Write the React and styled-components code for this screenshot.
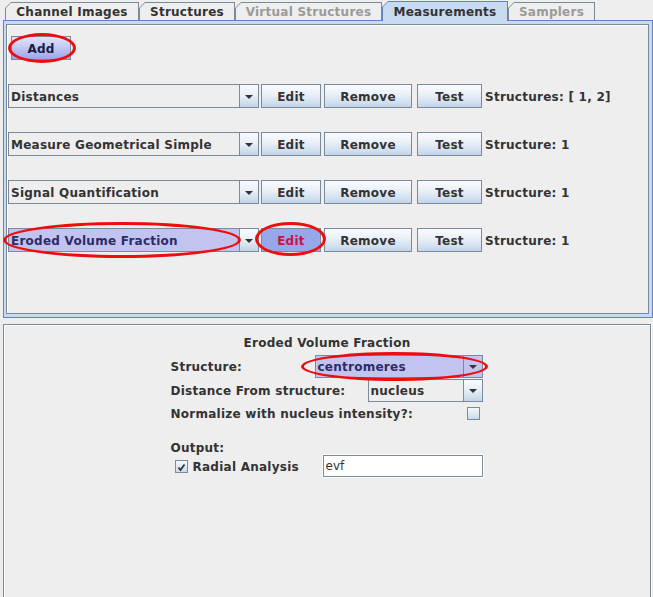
import React from "react";
import styled, { createGlobalStyle } from "styled-components";

const GlobalStyle = createGlobalStyle`
  html, body {
    margin: 0;
    padding: 0;
    background: #eeeeee;
  }
  body {
    font-family: "DejaVu Sans", Verdana, sans-serif;
    font-size: 12px;
    font-weight: 700;
    letter-spacing: 0.25px;
    color: #333333;
  }
`;

const measurements = [
	{ name: "Distances", info: "Structures: [ 1, 2]" },
	{ name: "Measure Geometrical Simple", info: "Structure: 1" },
	{ name: "Signal Quantification", info: "Structure: 1" },
	{ name: "Eroded Volume Fraction", info: "Structure: 1", marked: true },
];

const tabs = [
	{ label: "Channel Images", width: 134 },
	{ label: "Structures", width: 96 },
	{ label: "Virtual Structures", width: 147, disabled: true },
	{ label: "Measurements", width: 126, selected: true },
	{ label: "Samplers", width: 87, disabled: true },
];

function Combo({ value, width, height, marked, markArrow }) {
	return (
		<StyledCombo $width={width} $height={height}>
			<ComboField $marked={marked}>{value}</ComboField>
			<ComboArrow $marked={markArrow}>
				<DownTriangle />
			</ComboArrow>
		</StyledCombo>
	);
}

function Marked({ ring, children }) {
	return (
		<StyledMarked>
			{children}
			<Ring style={ring} />
		</StyledMarked>
	);
}

function App() {
	return (
		<>
			<GlobalStyle />
			<Root>
				<TabBar>
					{tabs.map((t) => (
						<Tab
							key={t.label}
							$width={t.width}
							$selected={t.selected}
							$disabled={t.disabled}
						>
							<span>{t.label}</span>
						</Tab>
					))}
				</TabBar>
				<TopPanel>
					<ListPanel>
						<AddRow>
							<Marked ring={{ left: -3, right: -5, top: -3, bottom: -3 }}>
								<Button $width={60} $variant="add">
									Add
								</Button>
							</Marked>
						</AddRow>
						{measurements.map((m) => (
							<MeasureRow key={m.name}>
								{m.marked ? (
									<Marked ring={{ left: -5, right: 18, top: -6, bottom: -6 }}>
										<Combo value={m.name} width={251} height={24} marked />
									</Marked>
								) : (
									<Combo value={m.name} width={251} height={24} />
								)}
								{m.marked ? (
									<Marked ring={{ left: -4, right: -5, top: -6, bottom: -4 }}>
										<Button $width={60} $gap={2} $variant="hot">
											Edit
										</Button>
									</Marked>
								) : (
									<Button $width={60} $gap={2}>
										Edit
									</Button>
								)}
								<Button $width={88} $gap={3}>
									Remove
								</Button>
								<Button $width={65} $gap={5}>
									Test
								</Button>
								<Info>{m.info}</Info>
							</MeasureRow>
						))}
					</ListPanel>
				</TopPanel>
				<EditorPanel>
					<Title>Eroded Volume Fraction</Title>
					<Form>
						<FormRow $height={23}>
							<Label>Structure:</Label>
							<Marked ring={{ left: -14, right: -5, top: -3, bottom: -3 }}>
								<Combo value="centromeres" width={168} height={23} marked markArrow />
							</Marked>
						</FormRow>
						<FormRow $height={23} $gap={1}>
							<Label>Distance From structure:</Label>
							<Combo value="nucleus" width={115} height={23} />
						</FormRow>
						<FormRow $height={20} $gap={1}>
							<Label>Normalize with nucleus intensity?:</Label>
							<CheckBox $right={3} />
						</FormRow>
						<SectionLabel>Output:</SectionLabel>
						<FormRow $height={22}>
							<CheckLabel>
								<CheckBox>
									<svg width="9" height="9" viewBox="0 0 9 9">
										<path d="M1.5 4.5 L3.5 7 L7.5 1.5" fill="none" stroke="#333" strokeWidth="1.8" />
									</svg>
								</CheckBox>
								<span>Radial Analysis</span>
							</CheckLabel>
							<TextField>evf</TextField>
						</FormRow>
					</Form>
				</EditorPanel>
			</Root>
		</>
	);
}

export default App;

const Root = styled.div`
	width: 653px;
	height: 597px;
	box-sizing: border-box;
	padding-left: 3px;
	display: flex;
	flex-direction: column;
	overflow: hidden;
`;

const TabBar = styled.div`
	height: 20px;
	display: flex;
	align-items: flex-end;
	padding-left: 2px;
`;

const Tab = styled.div`
	position: relative;
	box-sizing: border-box;
	width: ${(p) => p.$width}px;
	height: ${(p) => (p.$selected ? 20 : 18)}px;
	margin-bottom: ${(p) => (p.$selected ? -1 : 0)}px;
	background: ${(p) => (p.$selected ? "#6382bf" : "#7a8a99")};
	clip-path: polygon(6px 0, 100% 0, 100% 100%, 0 100%, 0 6px);
	display: flex;
	align-items: center;
	justify-content: center;
	color: ${(p) => (p.$disabled ? "#9a9a9a" : "#333333")};

	&::before {
		content: "";
		position: absolute;
		top: 1px;
		left: 1px;
		right: 1px;
		bottom: 0;
		background: ${(p) => (p.$selected ? "#c8daf0" : "#eeeeee")};
		clip-path: polygon(5px 0, 100% 0, 100% 100%, 0 100%, 0 5px);
	}

	span {
		position: relative;
		padding-top: 1px;
	}
`;

const TopPanel = styled.div`
	height: 298px;
	box-sizing: border-box;
	border: 1px solid #6382bf;
	background: #c8daf0;
	padding: 3px 3px 3px 2px;
	display: flex;
`;

const ListPanel = styled.div`
	flex: 1;
	background: #eeeeee;
	border: 1px solid #7a8a99;
	box-shadow: inset 1px 1px 0 #ffffff;
	padding: 11px 0 0 1px;
	display: flex;
	flex-direction: column;
	gap: 24px;
`;

const AddRow = styled.div`
	display: flex;
	padding-left: 3px;
`;

const MeasureRow = styled.div`
	display: flex;
	align-items: center;
	height: 24px;
`;

const StyledMarked = styled.div`
	position: relative;
	display: flex;
`;

const Ring = styled.span`
	position: absolute;
	border: 3px solid #ee0d0d;
	border-radius: 50%;
	pointer-events: none;
	z-index: 2;
`;

const StyledCombo = styled.div`
	width: ${(p) => p.$width}px;
	height: ${(p) => p.$height}px;
	display: flex;
	box-sizing: border-box;
`;

const ComboField = styled.div`
	flex: 1;
	box-sizing: border-box;
	border: 1px solid #7a8a99;
	border-right: none;
	background: ${(p) => (p.$marked ? "#c3c3f0" : "#eeeeee")};
	color: ${(p) => (p.$marked ? "#2c2c66" : "#333333")};
	padding: 1px 0 0 2px;
	display: flex;
	align-items: center;
	white-space: nowrap;
	overflow: hidden;
`;

const ComboArrow = styled.div`
	width: 20px;
	box-sizing: border-box;
	border: 1px solid #7a8a99;
	background: ${(p) =>
		p.$marked
			? "#c3c3f0"
			: "linear-gradient(to bottom, #fafcfe 0%, #e6eef6 50%, #c3d4e7 100%)"};
	display: flex;
	align-items: center;
	justify-content: center;
`;

const DownTriangle = styled.span`
	width: 0;
	height: 0;
	border-left: 4px solid transparent;
	border-right: 4px solid transparent;
	border-top: 4px solid #333333;
	margin-top: 1px;
`;

const Button = styled.div`
	width: ${(p) => p.$width}px;
	height: 24px;
	margin-left: ${(p) => p.$gap || 0}px;
	box-sizing: border-box;
	border: 1px solid #7a8a99;
	padding-top: 1px;
	display: flex;
	align-items: center;
	justify-content: center;
	color: ${(p) => (p.$variant === "hot" ? "#cc1144" : p.$variant === "add" ? "#1a1a44" : "#333333")};
	background: ${(p) =>
		p.$variant === "hot"
			? "#98a7ea"
			: p.$variant === "add"
			? "linear-gradient(to bottom, #dfe3fa 0%, #c4caf4 45%, #9aa5ea 100%)"
			: "linear-gradient(to bottom, #fbfcfe 0%, #e8eff7 45%, #c4d5e8 100%)"};
	cursor: pointer;
`;

const Info = styled.div`
	margin-left: 3px;
	padding-top: 1px;
	white-space: nowrap;
`;

const EditorPanel = styled.div`
	flex: 1;
	margin-top: 6px;
	margin-right: 2px;
	border: 1px solid #7a8a99;
	border-bottom: none;
	box-shadow: inset 1px 1px 0 #ffffff, 1px 0 0 #ffffff;
	padding-top: 10px;
	display: flex;
	flex-direction: column;
	align-items: center;
`;

const Title = styled.div`
	line-height: 16px;
	height: 16px;
`;

const Form = styled.div`
	width: 312px;
	margin-top: 4px;
	margin-left: -1px;
	display: flex;
	flex-direction: column;
`;

const FormRow = styled.div`
	height: ${(p) => p.$height}px;
	margin-top: ${(p) => p.$gap || 0}px;
	display: flex;
	align-items: center;
	justify-content: space-between;
`;

const Label = styled.div`
	white-space: nowrap;
	padding-top: 1px;
`;

const SectionLabel = styled.div`
	margin-top: 19px;
	height: 13px;
	line-height: 13px;
`;

const CheckLabel = styled.div`
	display: flex;
	align-items: center;
	gap: 5px;
	padding-left: 4px;

	span {
		padding-top: 2px;
	}
`;

const CheckBox = styled.span`
	width: 13px;
	height: 13px;
	box-sizing: border-box;
	margin-right: ${(p) => p.$right || 0}px;
	border: 1px solid #7a8a99;
	background: linear-gradient(to bottom, #f4f7fb 0%, #dce6f1 60%, #c8d8ea 100%);
	display: flex;
	align-items: center;
	justify-content: center;
`;

const TextField = styled.div`
	width: 160px;
	height: 22px;
	box-sizing: border-box;
	border: 1px solid #7a8a99;
	box-shadow: inset -1px -1px 0 #ffffff;
	outline: 1px solid #ffffff;
	background: #ffffff;
	font-weight: 400;
	letter-spacing: 0;
	padding-left: 2px;
	display: flex;
	align-items: center;
`;
